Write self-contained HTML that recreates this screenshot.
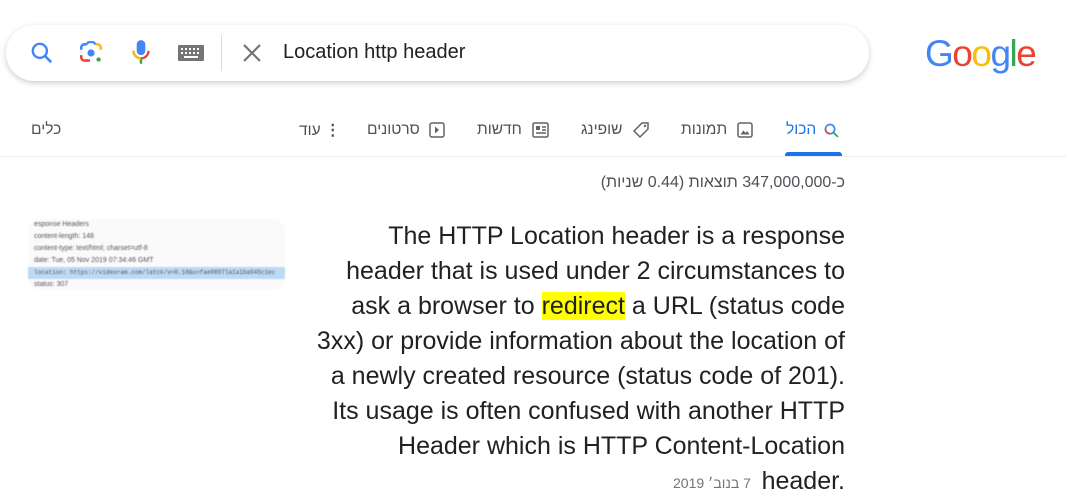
<!DOCTYPE html>
<html><head><meta charset="utf-8">
<style>
*{margin:0;padding:0;box-sizing:border-box}
body{width:1066px;height:503px;background:#fff;position:relative;overflow:hidden;font-family:"Liberation Sans",Arial,"Noto Sans CJK SC",sans-serif;color:#202124}
.abs{position:absolute}
.search{left:6px;top:25px;width:863px;height:56px;border-radius:28px;background:#fff;box-shadow:0 2px 6px rgba(32,33,36,.22)}
.tab{position:absolute;top:121px;font-size:15.5px;color:#4d5156;direction:rtl;white-space:nowrap}
.line{position:absolute;right:221px;font-size:25px;color:#202124;white-space:nowrap;text-align:right}
mark{background:#ff0;color:#202124}
</style></head><body>
<div class="abs search"></div>
<svg class="abs" style="left:29px;top:40px" width="26" height="26" viewBox="0 0 24 24"><circle cx="10" cy="10" r="6.5" fill="none" stroke="#4285f4" stroke-width="2.2"/><path d="M15 15l5.5 5.5" stroke="#4285f4" stroke-width="2.4"/></svg>
<svg class="abs" style="left:78px;top:40px" width="26" height="26" viewBox="0 0 24 24"><path d="M3 9V7a3 3 0 0 1 3-3h2" fill="none" stroke="#4285f4" stroke-width="2.4"/><path d="M16 4h2a3 3 0 0 1 3 3v2" fill="none" stroke="#fbbc04" stroke-width="2.4"/><path d="M3 14v2a3 3 0 0 0 3 3h5" fill="none" stroke="#ea4335" stroke-width="2.4"/><path d="M8 4l1.5-2h5L16 4" fill="none" stroke="#4285f4" stroke-width="2"/><circle cx="12" cy="12" r="3.3" fill="#4285f4"/><circle cx="19" cy="18" r="2" fill="#34a853"/></svg>
<svg class="abs" style="left:128px;top:38px" width="26" height="30" viewBox="0 0 24 28"><rect x="8" y="2" width="8" height="14" rx="4" fill="#4285f4"/><path d="M5 12a7 7 0 0 0 14 0" fill="none" stroke="#ea4335" stroke-width="2.2"/><path d="M12 19v5" stroke="#34a853" stroke-width="2.4"/><path d="M5 12a7 7 0 0 0 7 7" fill="none" stroke="#fbbc04" stroke-width="2.2"/></svg>
<svg class="abs" style="left:178px;top:45px" width="26" height="16" viewBox="0 0 26 16"><rect width="26" height="16" rx="1" fill="#757575"/><g fill="#fff"><rect x="3" y="3" width="2" height="2"/><rect x="7" y="3" width="2" height="2"/><rect x="11" y="3" width="2" height="2"/><rect x="15" y="3" width="2" height="2"/><rect x="19" y="3" width="2" height="2"/><rect x="3" y="7" width="2" height="2"/><rect x="7" y="7" width="2" height="2"/><rect x="11" y="7" width="2" height="2"/><rect x="15" y="7" width="2" height="2"/><rect x="19" y="7" width="2" height="2"/><rect x="6" y="11" width="14" height="2"/></g></svg>
<div class="abs" style="left:221px;top:35px;width:1px;height:36px;background:#dadce0"></div>
<svg class="abs" style="left:241px;top:42px" width="22" height="22" viewBox="0 0 22 22"><path d="M3 3l16 16M19 3L3 19" stroke="#70757a" stroke-width="2.2"/></svg>
<div class="abs" style="left:283px;top:41px;font-size:20px;color:#202124">Location http header</div>
<div class="abs" style="left:925px;top:33px;font-size:37px;letter-spacing:-1.5px;font-family:'Liberation Sans',sans-serif"><span style="color:#4285f4">G</span><span style="color:#ea4335">o</span><span style="color:#fbbc05">o</span><span style="color:#4285f4">g</span><span style="color:#34a853">l</span><span style="color:#ea4335">e</span></div>

<div class="tab" style="left:31px">כלים</div>
<div class="tab" style="left:299px"><span style="font-weight:bold">⋮</span> עוד</div>
<div class="tab" style="left:367px">סרטונים</div>
<svg class="abs" style="left:429px;top:122px" width="16" height="16" viewBox="0 0 16 16"><rect x="1" y="1" width="14" height="14" rx="2" fill="none" stroke="#5f6368" stroke-width="1.5"/><path d="M6 4.5l4 3.5-4 3.5z" fill="#5f6368"/></svg>
<div class="tab" style="left:477px">חדשות</div>
<svg class="abs" style="left:532px;top:122px" width="17" height="16" viewBox="0 0 17 16"><rect x="1" y="1" width="15" height="14" rx="1.5" fill="none" stroke="#5f6368" stroke-width="1.5"/><rect x="4" y="4" width="4" height="4" fill="#5f6368"/><path d="M10 5h4M10 8h4M4 11h10" stroke="#5f6368" stroke-width="1.4"/></svg>
<div class="tab" style="left:581px">שופינג</div>
<svg class="abs" style="left:632px;top:121px" width="18" height="18" viewBox="0 0 18 18"><path d="M10 2h6v6l-8 8-6-6z" fill="none" stroke="#5f6368" stroke-width="1.5"/><circle cx="13" cy="5" r="1.2" fill="#5f6368"/></svg>
<div class="tab" style="left:681px">תמונות</div>
<svg class="abs" style="left:737px;top:122px" width="16" height="16" viewBox="0 0 16 16"><rect x="1" y="1" width="14" height="14" rx="2" fill="none" stroke="#5f6368" stroke-width="1.5"/><path d="M3.5 12.5l3-4 2 2.5 1.5-2 2.5 3.5z" fill="#5f6368"/></svg>
<div class="tab" style="left:786px;color:#1a73e8">הכול</div>
<svg class="abs" style="left:823px;top:122px" width="17" height="17" viewBox="0 0 24 24"><circle cx="10" cy="10" r="6.5" fill="none" stroke="#4285f4" stroke-width="2.4"/><path d="M3.5 10a6.5 6.5 0 0 0 6.5 6.5" fill="none" stroke="#ea4335" stroke-width="2.4"/><path d="M15 15l6 6" stroke="#34a853" stroke-width="2.6"/></svg>
<div class="abs" style="left:785px;top:152px;width:57px;height:4px;background:#1a73e8;border-radius:3px 3px 0 0"></div>
<div class="abs" style="left:0;top:156px;width:1066px;height:1px;background:#ebebeb"></div>
<div class="abs" style="right:221px;top:174px;font-size:16px;color:#4d5156;direction:rtl;white-space:nowrap">כ-347,000,000 תוצאות (0.44 שניות)</div>

<div class="abs" style="left:28px;top:219px;width:257px;height:71px;border-radius:12px;background:#fafafa;overflow:hidden;font-family:'Liberation Sans',sans-serif;font-size:7px;color:#555;filter:blur(.6px);line-height:12px;padding:0 6px">
<div>esponse Headers</div><div>content-length: 148</div><div>content-type: text/html; charset=utf-8</div><div>date: Tue, 05 Nov 2019 07:34:46 GMT</div><div style="background:#bcdaf5;margin:0 -6px;padding:0 6px;font-family:'Liberation Mono',monospace;font-size:6px">location: https://videoram.com/latck/v=0.18&amp;u=fae0897la1a1ba045c1ec</div><div>status: 307</div></div>

<div class="line" style="top:222px">The HTTP Location header is a response</div>
<div class="line" style="top:257px">header that is used under 2 circumstances to</div>
<div class="line" style="top:292px">ask a browser to <mark>redirect</mark> a URL (status code</div>
<div class="line" style="top:327px">3xx) or provide information about the location of</div>
<div class="line" style="top:362px">a newly created resource (status code of 201).</div>
<div class="line" style="top:397px">Its usage is often confused with another HTTP</div>
<div class="line" style="top:432px">Header which is HTTP Content-Location</div>
<div class="line" style="top:467px">header.</div>
<div class="abs" style="left:673px;top:475px;font-size:14px;color:#70757a;direction:rtl;white-space:nowrap">7 בנוב׳ 2019</div>
</body></html>
